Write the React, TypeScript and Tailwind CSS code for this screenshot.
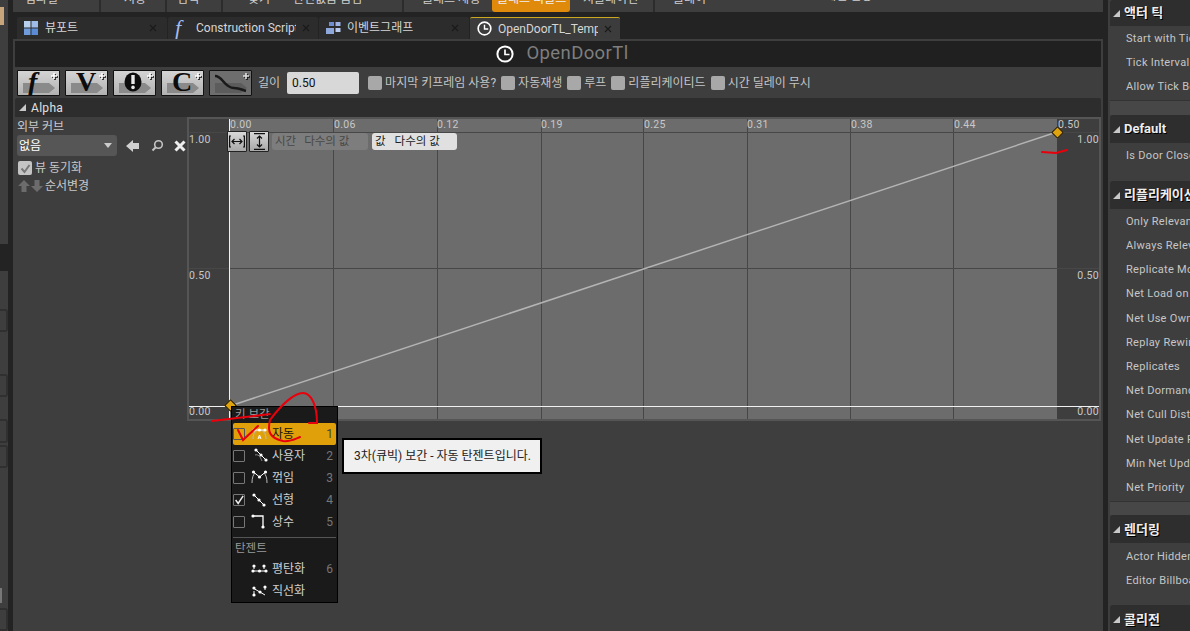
import React from "react";

const menuItems = [
  { label: "컴파일", cls: "w-[88px] pl-[12px] border-r-2 border-[#2c2c2c]" },
  { label: "저장", cls: "w-[66px] pl-[23px] border-r-2 border-[#2c2c2c]" },
  { label: "검색", cls: "w-[56px] pl-[10px] border-r-2 border-[#2c2c2c]" },
  { label: "찾기", cls: "w-[60px] pl-[25px]" },
  { label: "관련없음 숨김", cls: "w-[121px] pl-[10px] border-r-2 border-[#2c2c2c]" },
  { label: "클래스 세팅", cls: "w-[88px] pl-[18px]" },
  { label: "클래스 디폴트", cls: "w-[78px] pl-[5px] bg-[#e08a0c] rounded-b-[3px] text-[#f0f0f0]" },
  { label: "시뮬레이션", cls: "w-[85px] pl-[13px] border-r-2 border-[#2c2c2c]" },
  { label: "플레이", cls: "w-[170px] pl-[18px]" },
];

const actorRows = ["Start with Tick Enabled", "Tick Interval (secs)", "Allow Tick Before Begin Play"];
const replRows = [
  "Only Relevant to Owner",
  "Always Relevant",
  "Replicate Movement",
  "Net Load on Client",
  "Net Use Owner Relevancy",
  "Replay Rewindable",
  "Replicates",
  "Net Dormancy",
  "Net Cull Distance Squared",
  "Net Update Frequency",
  "Min Net Update Frequency",
  "Net Priority",
];
const renderRows = ["Actor Hidden In Game", "Editor Billboard Scale"];

const ClockIcon = ({ size }: { size: number }) => (
  <svg width={size} height={size} viewBox="0 0 18 18" fill="none" className="shrink-0">
    <circle cx="9" cy="9" r="7.6" stroke="#fff" strokeWidth="2" />
    <path d="M9 4.5V9.5H13.5" stroke="#fff" strokeWidth="1.7" />
  </svg>
);

const Triangle = () => (
  <svg width="7" height="7" viewBox="0 0 7 7" className="shrink-0">
    <path d="M7 0V7H0Z" fill="#c8c8c8" />
  </svg>
);

const CloseX = () => (
  <svg width="8" height="8" viewBox="0 0 8 8" className="shrink-0">
    <path d="M1 1L7 7M7 1L1 7" stroke="#1a1a1a" strokeWidth="1.2" />
  </svg>
);

const ToolButton = ({ glyph, dim, italic, alert }: { glyph?: string; dim?: boolean; italic?: boolean; alert?: boolean }) => (
  <div
    className={`relative h-[26px] w-[43px] rounded-[1px] border border-[#111] overflow-hidden ${
      dim ? "bg-[#6e6e6e]" : "bg-gradient-to-b from-[#d4d4d4] to-[#b2b2b2]"
    }`}
  >
    <svg width="41" height="24" viewBox="0 0 41 24" className="absolute left-0 top-0">
      <path d="M5 12H31L37 17L31 22H5Z" fill={dim ? "#5c5c5c" : "#8a8a8a"} />
      {dim && <path d="M5 5C13 5 14 17 24 17C30 17 32 19 36 20" stroke="#1a1a1a" strokeWidth="2.6" fill="none" />}
      {alert && (
        <>
          <ellipse cx="19" cy="11" rx="8.5" ry="9.5" fill="#0c0c0c" />
          <path d="M19 4V13" stroke="#e8e8e8" strokeWidth="3.4" />
          <circle cx="19" cy="16.4" r="1.8" fill="#e8e8e8" />
        </>
      )}
      <path d="M33 5H39M36 2V8" stroke="#111" strokeWidth="1.6" transform="translate(1 1)" />
      <path d="M33 5H39M36 2V8" stroke={dim ? "#e0e0e0" : "#fff"} strokeWidth="1.6" />
    </svg>
    {glyph && (
      <span
        className={`absolute left-[10px] top-[-4px] text-[28px] leading-[30px] font-bold text-[#0c0c0c] font-['Liberation_Serif',serif] ${
          italic ? "italic" : ""
        }`}
      >
        {glyph}
      </span>
    )}
  </div>
);

const Check = ({ label }: { label: string }) => (
  <div className="flex items-center gap-[3px]">
    <div className="h-[14px] w-[14px] rounded-[2px] bg-[#a8a8a8]" />
    <span className="text-[12px] text-[#c4c4c4] whitespace-nowrap">{label}</span>
  </div>
);

const Row = ({ label, cls }: { label: string; cls?: string }) => (
  <div className={`pl-[16px] pt-[2px] flex shrink-0 items-center whitespace-nowrap text-[11px] tracking-[0.3px] text-[#c6c6c6] ${cls ?? "h-[24px]"}`}>
    {label}
  </div>
);

const Header = ({ label, cls }: { label: string; cls: string }) => (
  <div className={`bg-[#2e2e2e] rounded-tl-[3px] flex items-center gap-[4px] pl-[3px] ${cls}`}>
    <Triangle />
    <span className="text-[13px] font-bold whitespace-nowrap text-[#eeeeee] [text-shadow:1px_1px_0_#000]">{label}</span>
  </div>
);

const Diamond = ({ cls }: { cls: string }) => (
  <div className={`absolute h-[9px] w-[9px] rotate-45 bg-[#dfa30d] border border-[#111] ${cls}`} />
);

const AxisLabel = ({ text, cls }: { text: string; cls: string }) => (
  <span className={`absolute text-[10.5px] leading-[12px] tracking-[0.3px] text-[#c8c8c8] ${cls}`}>{text}</span>
);

const dot = (x: number, y: number) => <circle key={`${x}-${y}`} cx={x} cy={y} r="1.6" fill="#fff" stroke="none" />;

const KeyIcon = ({ type }: { type: string }) => (
  <svg width="18" height="18" viewBox="0 0 18 18" fill="none" stroke="#fff" strokeWidth="1" className="shrink-0">
    {type === "auto" && (
      <>
        <path d="M2 14C2 8 5 5 8 5C12 5 15 8 15 14" stroke="#bbb" />
        <path d="M2 5H15" />
        {dot(3, 5)}
        {dot(8.5, 5)}
        {dot(14, 5)}
        <path d="M7 14L8.5 10L10 14M7.6 12.8H9.4" />
      </>
    )}
    {type === "user" && (
      <>
        <path d="M5 3L15 13" />
        <path d="M4 8C7 7 9 9 11 14" stroke="#888" />
        {dot(5, 3)}
        {dot(10, 8)}
        {dot(15, 13)}
      </>
    )}
    {type === "break" && (
      <>
        <path d="M1 14C1 9 2 6 4 4M16 14C16 9 15 6 13 4" stroke="#bbb" />
        <path d="M2.5 3L8.5 8L14.5 3" />
        {dot(2.5, 3)}
        {dot(8.5, 8)}
        {dot(14.5, 3)}
      </>
    )}
    {type === "linear" && (
      <>
        <path d="M3 4L13 14" />
        {dot(3, 4)}
        {dot(8, 9)}
        {dot(13, 14)}
      </>
    )}
    {type === "const" && (
      <>
        <path d="M2 3H12V14" strokeWidth="1.3" />
        {dot(2, 3)}
        {dot(12, 14)}
      </>
    )}
    {type === "flat" && (
      <>
        <path d="M1 11H16M3 6V9M13 6V9" />
        {dot(2, 11)}
        {dot(8.5, 11)}
        {dot(15, 11)}
        {dot(3, 6)}
        {dot(13, 6)}
      </>
    )}
    {type === "straight" && (
      <>
        <path d="M2 6L14 13M3 9V13M14 4V8" />
        {dot(3, 6)}
        {dot(9, 10)}
        {dot(14, 5)}
        {dot(3, 13)}
      </>
    )}
  </svg>
);

const KeyRow = ({
  type,
  label,
  num,
  checked,
  active,
  noBox,
}: {
  type: string;
  label: string;
  num?: string;
  checked?: boolean;
  active?: boolean;
  noBox?: boolean;
}) => (
  <div className={`flex h-[22px] items-center pr-[3px] rounded-[2px] ${active ? "bg-[#dfa00a]" : ""}`}>
    {noBox ? (
      <div className="w-[12px]" />
    ) : (
      <div className={`flex h-[12px] w-[12px] items-center justify-center rounded-[1px] border ${active ? "border-[#555]" : "border-[#777]"}`}>
        {checked && (
          <svg width="12" height="12" viewBox="0 0 12 12" fill="none">
            <path d="M2 6L5 10L11 1" stroke="#eee" strokeWidth="1.8" />
          </svg>
        )}
      </div>
    )}
    <div className="ml-[6px]">
      <KeyIcon type={type} />
    </div>
    <span className={`ml-[3px] text-[12px] ${active ? "text-[#111]" : "text-[#cfcfcf]"}`}>{label}</span>
    <span className={`ml-auto text-[12px] ${active ? "text-[#444]" : "text-[#777]"}`}>{num}</span>
  </div>
);

export default function App() {
  return (
    <div className="relative flex h-[631px] w-[1190px] overflow-hidden bg-[#232323] font-['Roboto','Noto_Sans_CJK_KR',sans-serif]">
      {/* 왼쪽 패널 조각 */}
      <div className="relative w-[8px] shrink-0 bg-[#3e3e3e] flex flex-col">
        <div className="mt-[7px] h-[19px] w-[4px] bg-[#c9a57c]" />
        <div className="mt-[219px] h-[27px] bg-[#232323]" />
        <div className="mt-[38px] h-[24px] rounded-r-[3px] border-2 border-l-0 border-[#303030]" />
        <div className="mt-[42px] h-[24px] rounded-r-[3px] border-2 border-l-0 border-[#303030]" />
        <div className="mt-[22px] h-[24px] rounded-r-[3px] border-2 border-l-0 border-[#303030]" />
        <div className="mt-[2px] h-[24px] rounded-r-[3px] border-2 border-l-0 border-[#303030]" />
        <div className="mt-[120px] h-[15px] w-[2px] bg-[#777]" />
        <div className="mt-[5px] h-[24px] rounded-r-[3px] border-2 border-l-0 border-[#303030]" />
      </div>

      <div className="ml-[5px] flex w-[1090px] shrink-0 flex-col">
        <div className="flex h-[12px] shrink-0 items-end overflow-hidden bg-[#3e3e3e] text-[12px] text-[#cfcfcf]">
          {menuItems.map((m) => (
            <div key={m.label} className={`h-[12px] shrink-0 overflow-visible whitespace-nowrap leading-[11px] ${m.cls}`}>
              <div className="-mt-[6px]">{m.label}</div>
            </div>
          ))}
          <div className="h-[12px] shrink-0 whitespace-nowrap leading-[11px]">
            <div className="-mt-[9px]">레벨 설정</div>
          </div>
        </div>

        {/* 탭 */}
        <div className="flex h-[27px] shrink-0 items-end gap-[1px] pl-[4px] text-[12px]">
          <div className="flex h-[22px] w-[150px] items-center rounded-t-[2px] bg-[#2c2c2c] pl-[6px] pr-[10px]">
            <svg width="16" height="16" viewBox="0 0 16 16" className="shrink-0">
              <rect x="1" y="1" width="6.5" height="6.5" fill="#b8cfee" />
              <rect x="8.5" y="1" width="6.5" height="6.5" fill="#9dbbe6" />
              <rect x="1" y="8.5" width="6.5" height="6.5" fill="#6f9adb" />
              <rect x="8.5" y="8.5" width="6.5" height="6.5" fill="#5b8bd5" />
            </svg>
            <span className="ml-[6px] text-[#d6d6d6]">뷰포트</span>
            <span className="ml-auto"><CloseX /></span>
          </div>
          <div className="flex h-[22px] w-[150px] items-center rounded-t-[2px] bg-[#2c2c2c] pl-[7px] pr-[8px]">
            <span className="w-[14px] text-[22px] italic leading-[20px] text-[#a4bdf0] font-['Liberation_Serif',serif]">f</span>
            <span className="ml-[7px] w-[100px] overflow-hidden whitespace-nowrap text-[#d6d6d6]">Construction Script</span>
            <span className="ml-auto"><CloseX /></span>
          </div>
          <div className="flex h-[22px] w-[150px] items-center rounded-t-[2px] bg-[#2c2c2c] pl-[6px] pr-[10px]">
            <svg width="16" height="14" viewBox="0 0 16 14" className="shrink-0">
              <rect x="1" y="7" width="8" height="6" fill="#8fa8dc" />
              <rect x="4" y="1" width="5" height="4" fill="#6f8fd0" />
              <rect x="10.5" y="1" width="5" height="4" fill="#9db4e4" />
              <rect x="10.5" y="7" width="5" height="4" fill="#b8caee" />
            </svg>
            <span className="ml-[6px] text-[#d6d6d6]">이벤트그래프</span>
            <span className="ml-auto"><CloseX /></span>
          </div>
          <div className="flex h-[22px] w-[150px] items-center rounded-t-[2px] border-t border-[#c9a820] bg-[#3c3c3c] pl-[7px] pr-[8px]">
            <ClockIcon size={15} />
            <span className="ml-[6px] w-[100px] overflow-hidden whitespace-nowrap text-[#d6d6d6]">OpenDoorTL_Template</span>
            <span className="ml-auto"><CloseX /></span>
          </div>
        </div>

        {/* 에디터 */}
        <div className="flex flex-1 flex-col bg-[#3e3e3e] px-[2px] pt-[2px]">
          <div className="flex h-[26px] shrink-0 items-center justify-center bg-[#202020] pl-[9px]">
            <ClockIcon size={18} />
            <span className="ml-[12px] text-[18.5px] tracking-[0.4px] text-[#7e7e7e]">OpenDoorTl</span>
          </div>

          <div className="flex h-[31px] shrink-0 items-center pl-[2px]">
            <div className="flex gap-[5px]">
              <ToolButton glyph="f" italic />
              <ToolButton glyph="V" />
              <ToolButton alert />
              <ToolButton glyph="C" />
              <ToolButton dim />
            </div>
            <span className="ml-[6px] text-[12px] text-[#c4c4c4]">길이</span>
            <div className="ml-[7px] flex h-[22px] w-[72px] items-center rounded-[2px] bg-[#d8d8d8] pl-[5px] text-[12px] text-[#111]">0.50</div>
            <div className="ml-[9px] flex gap-[5px]">
              <Check label="마지막 키프레임 사용?" />
              <Check label="자동재생" />
              <Check label="루프" />
              <Check label="리플리케이티드" />
              <Check label="시간 딜레이 무시" />
            </div>
          </div>

          <div className="flex h-[19px] shrink-0 items-center gap-[5px] rounded-t-[2px] bg-[#2d2d2d] pl-[4px]">
            <Triangle />
            <span className="text-[12px] tracking-[0.3px] text-[#e0e0e0]">Alpha</span>
          </div>

          <div className="flex">
            <div className="w-[172px] shrink-0 pl-[2px] text-[#c8c8c8]">
              <div className="mt-[2px] h-[16px] text-[12px] leading-[16px]">외부 커브</div>
              <div className="flex h-[21px] items-center">
                <div className="flex h-[21px] w-[100px] items-center justify-between rounded-[3px] bg-[#565656] pl-[2px] pr-[5px]">
                  <span className="text-[12px] text-white">없음</span>
                  <svg width="8" height="5" viewBox="0 0 8 5"><path d="M0 0H8L4 5Z" fill="#ccc" /></svg>
                </div>
                <svg width="14" height="12" viewBox="0 0 14 12" className="ml-[9px]">
                  <path d="M0 6L7 0V3H13V9H7V12Z" fill="#d0d0d0" />
                </svg>
                <svg width="13" height="13" viewBox="0 0 13 13" fill="none" className="ml-[11px]">
                  <circle cx="7.5" cy="5.5" r="3.8" stroke="#c4c4c4" strokeWidth="1.6" />
                  <path d="M5 8L1.5 11.5" stroke="#c4c4c4" strokeWidth="2" />
                </svg>
                <svg width="12" height="12" viewBox="0 0 12 12" className="ml-[10px]">
                  <path d="M1.5 1.5L10.5 10.5M10.5 1.5L1.5 10.5" stroke="#eee" strokeWidth="3" />
                </svg>
              </div>
              <div className="mt-[5px] flex h-[14px] items-center pl-[1px]">
                <div className="flex h-[14px] w-[14px] items-center justify-center rounded-[2px] bg-[#c4c4c4]">
                  <svg width="11" height="11" viewBox="0 0 11 11" fill="none">
                    <path d="M1.5 5.5L4.5 9L9.5 2" stroke="#777" strokeWidth="2" />
                  </svg>
                </div>
                <span className="ml-[3px] text-[12px]">뷰 동기화</span>
              </div>
              <div className="mt-[3px] flex h-[16px] items-center pl-[1px]">
                <svg width="25" height="12" viewBox="0 0 25 12">
                  <path d="M6 0L12 6H8.5V12H3.5V6H0Z" fill="#6c6c6c" />
                  <path d="M19 12L25 6H21.5V0H16.5V6H13Z" fill="#6c6c6c" />
                </svg>
                <span className="ml-[2px] text-[12px]">순서변경</span>
              </div>
            </div>

            {/* 커브 그래프 */}
            <div className="relative h-[304px] w-[914px] shrink-0 border-2 border-[#555]">
              <svg width="910" height="300" viewBox="0 0 910 300" className="absolute left-0 top-0">
                <rect width="910" height="300" fill="#3e3e3e" />
                <rect x="40" width="828" height="300" fill="#6c6c6c" />
                <path d="M144.5 0V300M248.5 0V300M352.5 0V300M454.5 0V300M558.5 0V300M661.5 0V300M764.5 0V300" stroke="#474747" />
                <path d="M0 13.5H910M0 149.5H910" stroke="#474747" />
                <path d="M40.5 0V300" stroke="#f0f0f0" />
                <path d="M0 287.5H910" stroke="#f0f0f0" />
                <path d="M41 287L868 13" stroke="#b4b4b4" strokeWidth="1.5" />
              </svg>
              {[
                ["0.00", "left-[41px]"],
                ["0.06", "left-[145px]"],
                ["0.12", "left-[248px]"],
                ["0.19", "left-[352px]"],
                ["0.25", "left-[455px]"],
                ["0.31", "left-[558px]"],
                ["0.38", "left-[662px]"],
                ["0.44", "left-[765px]"],
                ["0.50", "left-[869px]"],
              ].map(([t, c]) => (
                <AxisLabel key={t} text={t} cls={`top-[0px] ${c}`} />
              ))}
              <AxisLabel text="1.00" cls="left-[0px] top-[15px]" />
              <AxisLabel text="0.50" cls="left-[0px] top-[151px]" />
              <AxisLabel text="0.00" cls="left-[0px] top-[287px]" />
              <AxisLabel text="1.00" cls="right-[0px] top-[15px]" />
              <AxisLabel text="0.50" cls="right-[0px] top-[151px]" />
              <AxisLabel text="0.00" cls="right-[0px] top-[287px]" />

              <div className="absolute left-[38px] top-[12px] flex items-center">
                <div className="flex h-[21px] w-[20px] items-center justify-center rounded-[1px] border border-[#222] bg-gradient-to-b from-[#d8d8d8] to-[#a8a8a8]">
                  <svg width="16" height="13" viewBox="0 0 16 13" fill="none" stroke="#111" strokeWidth="1.2">
                    <path d="M2 1H.6V12H2M14 1H15.4V12H14M3 6.5H13M5.5 4L3 6.5L5.5 9M10.5 4L13 6.5L10.5 9" />
                  </svg>
                </div>
                <div className="ml-[2px] flex h-[21px] w-[20px] items-center justify-center rounded-[1px] border border-[#222] bg-gradient-to-b from-[#d8d8d8] to-[#a8a8a8]">
                  <svg width="13" height="17" viewBox="0 0 13 17" fill="none" stroke="#111" strokeWidth="1.2">
                    <path d="M1 .6H12M1 16.4H12M6.5 3V14M4 5.5L6.5 3L9 5.5M4 11.5L6.5 14L9 11.5" />
                  </svg>
                </div>
                <div className="ml-[3px] flex h-[17px] w-[96px] items-center rounded-[3px] bg-[#7d7d7d] pl-[3px] text-[11.5px] text-[#484848]">
                  <span>시간</span>
                  <span className="ml-[8px]">다수의 값</span>
                </div>
                <div className="ml-[4px] flex h-[17px] w-[85px] items-center rounded-[3px] bg-[#e0e0e0] pl-[3px] text-[11.5px] text-[#222]">
                  <span>값</span>
                  <span className="ml-[9px]">다수의 값</span>
                </div>
              </div>
              <Diamond cls="left-[864px] top-[9px]" />
              <Diamond cls="left-[37px] top-[282px]" />
            </div>
          </div>
        </div>
      </div>

      {/* 디테일 패널 */}
      <div className="ml-[5px] flex w-[82px] shrink-0 flex-col overflow-hidden bg-[#3e3e3e] pl-[2px]">
        <Header label="액터 틱" cls="h-[26px] w-[120px] shrink-0 rounded-none" />
        {actorRows.map((r) => <Row key={r} label={r} />)}
        <div className="mt-[2px] h-[15px] shrink-0 border-t border-[#333] bg-[#474747]" />
        <Header label="Default" cls="h-[28px] w-[120px] shrink-0" />
        <Row label="Is Door Closed" />
        <div className="h-[14px] shrink-0" />
        <Header label="리플리케이션" cls="h-[28px] w-[120px] shrink-0" />
        {replRows.map((r) => <Row key={r} label={r} cls="h-[24.2px]" />)}
        <div className="mt-[2px] h-[14px] shrink-0 border-t border-[#333] bg-[#474747]" />
        <Header label="렌더링" cls="h-[28px] w-[120px] shrink-0" />
        {renderRows.map((r) => <Row key={r} label={r} cls="h-[24px] pt-[3px]" />)}
        <div className="h-[14px] shrink-0" />
        <Header label="콜리전" cls="h-[28px] w-[120px] shrink-0" />
      </div>

      {/* 키 보간 메뉴 */}
      <div className="absolute left-[231px] top-[406px] h-[197px] w-[107px] border border-black bg-[#1a1a1a] px-[1px]">
        <div className="h-[16px] pl-[2px] text-[11.5px] leading-[14px] text-[#9a9a9a]">키 보간</div>
        <KeyRow type="auto" label="자동" num="1" active />
        <KeyRow type="user" label="사용자" num="2" />
        <KeyRow type="break" label="꺾임" num="3" />
        <KeyRow type="linear" label="선형" num="4" checked />
        <KeyRow type="const" label="상수" num="5" />
        <div className="mt-[4px] border-t border-[#555]" />
        <div className="h-[20px] pl-[2px] text-[11.5px] leading-[21px] text-[#9a9a9a]">탄젠트</div>
        <KeyRow type="flat" label="평탄화" num="6" noBox />
        <KeyRow type="straight" label="직선화" noBox />
      </div>

      {/* 툴팁 */}
      <div className="absolute left-[342px] top-[438px] flex h-[36px] w-[200px] items-center border-2 border-black bg-[#f0f0f0] pl-[10px] text-[12px] text-[#222] whitespace-nowrap">
        3차(큐빅) 보간 - 자동 탄젠트입니다.
      </div>

      {/* 빨간 펜 표시 */}
      <svg width="1190" height="631" viewBox="0 0 1190 631" fill="none" stroke="#e8000c" strokeWidth="2" strokeLinecap="round" className="pointer-events-none absolute left-0 top-0">
        <path d="M212 421L270 414" />
        <path d="M309 423H317C317 405 311 393 303 393C294 393 281 405 270 420C267 432 270 438 283 441C290 442 295 439 300 437" />
        <path d="M238 430L243 440L258 426" />
        <path d="M1042 152L1056 153L1067 150" />
      </svg>
    </div>
  );
}
